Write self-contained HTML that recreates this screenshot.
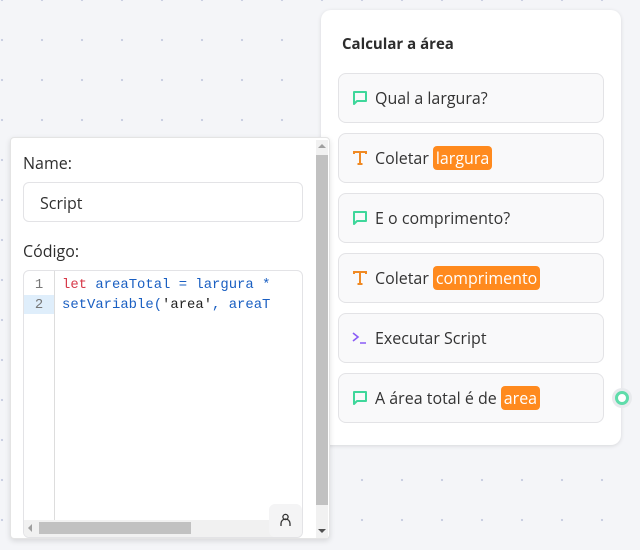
<!DOCTYPE html>
<html><head><meta charset="utf-8"><style>
*{box-sizing:border-box;margin:0;padding:0}
body{width:640px;height:550px;overflow:hidden;position:relative;font-family:"Open Sans","Liberation Sans",sans-serif;color:#303030;
background-color:#f4f5f8;background-image:radial-gradient(circle,#c8cde0 1px,transparent 1.3px);background-size:40px 40px;background-position:-18px -20px}
.group{position:absolute;left:321px;top:10px;width:300px;height:435px;background:#fff;border-radius:10px;box-shadow:0 1px 4px rgba(0,0,0,.12)}
.title{position:absolute;left:21px;top:24px;font-size:15px;font-weight:bold;color:#2d2d2d}
.item{position:absolute;left:17px;width:266px;height:50px;background:#f9f9fa;border:1px solid #e3e3e6;border-radius:8px;font-size:16px;display:flex;align-items:center;padding-left:36px;color:#333}
.item svg{position:absolute;left:13px;top:16px}
.tag{background:#ff8a1e;color:#fff;border-radius:4px;padding:0 3px;margin-left:4px;line-height:24px}
.pop{position:absolute;left:10px;top:137px;width:320px;height:402px;background:#fff;border:1px solid #e4e4e4;border-radius:4px;box-shadow:0 2px 6px rgba(0,0,0,.12)}
.lbl{position:absolute;left:12px;font-size:16px;color:#2d2d2d}
.inp{position:absolute;left:12px;top:44px;width:280px;height:40px;border:1px solid #e3e3e6;border-radius:6px;font-size:16px;padding:9px 16px}
.ed{position:absolute;left:12px;top:132px;width:280px;height:268px;border:1px solid #e3e3e6;border-radius:6px;overflow:hidden;font-family:"Liberation Mono",monospace;font-size:13.9px}
.gut{position:absolute;left:0;top:0;width:31px;height:252px;border-right:1px solid #ddd}
.ln{position:absolute;left:0;width:30px;height:20px;text-align:center;color:#777;line-height:20px}
.code{position:absolute;left:38px;line-height:20px;white-space:pre;color:#1a5fc2}
.sb{position:absolute;left:305px;top:2px;width:12px;height:398px;background:#f1f1f1}
</style></head><body>
<div class="group">
<div class="title">Calcular a área</div>
<div class="item" style="top:63px"><svg width="16" height="16" viewBox="0 0 16 16" fill="none" stroke="#3fd79b" stroke-width="2"><path d="M2 2h12v9H5l-3 3z" stroke-linejoin="round"/></svg>Qual a largura?</div>
<div class="item" style="top:123px"><svg width="16" height="16" viewBox="0 0 16 16" fill="none" stroke="#f08a24" stroke-width="2"><path d="M2 4V2h12v2M8 2v12M5.5 14h5"/></svg>Coletar <span class="tag">largura</span></div>
<div class="item" style="top:183px"><svg width="16" height="16" viewBox="0 0 16 16" fill="none" stroke="#3fd79b" stroke-width="2"><path d="M2 2h12v9H5l-3 3z" stroke-linejoin="round"/></svg>E o comprimento?</div>
<div class="item" style="top:243px"><svg width="16" height="16" viewBox="0 0 16 16" fill="none" stroke="#f08a24" stroke-width="2"><path d="M2 4V2h12v2M8 2v12M5.5 14h5"/></svg>Coletar <span class="tag">comprimento</span></div>
<div class="item" style="top:303px"><svg width="16" height="16" viewBox="0 0 16 16" fill="none" stroke="#8b5cf6" stroke-width="1.6"><path d="M1 3l5 4-5 4M8 13h6"/></svg>Executar Script</div>
<div class="item" style="top:363px"><svg width="16" height="16" viewBox="0 0 16 16" fill="none" stroke="#3fd79b" stroke-width="2"><path d="M2 2h12v9H5l-3 3z" stroke-linejoin="round"/></svg>A área total é de <span class="tag">area</span></div>
</div>
<div style="position:absolute;left:612px;top:388px;width:20px;height:20px;border-radius:50%;background:#e8eaed"></div>
<div style="position:absolute;left:615px;top:391px;width:14px;height:14px;border-radius:50%;border:3px solid #5fdcaa;background:#fff"></div>
<div class="pop">
<div class="lbl" style="top:14px">Name:</div>
<div class="inp">Script</div>
<div class="lbl" style="top:102px">Código:</div>
<div class="ed">
<div class="gut"></div>
<div style="position:absolute;left:0;top:24px;width:30px;height:19px;background:#dfeefb"></div>
<div class="ln" style="top:4px">1</div><div class="ln" style="top:24px">2</div>
<div class="code" style="top:4px"><span style="color:#d73a49">let</span> areaTotal = largura *</div>
<div class="code" style="top:24px">setVariable(<span style="color:#222">'area'</span>, areaT</div>
<div style="position:absolute;left:0;top:249px;width:279px;height:17px;background:#f1f1f1"></div>
<div style="position:absolute;left:15px;top:251px;width:152px;height:12px;background:#c1c1c1"></div>
<div style="position:absolute;left:4px;top:253px;width:0;height:0;border:4px solid transparent;border-right-color:#a0a0a0;border-left:0"></div>
<div style="position:absolute;left:245px;top:233px;width:33px;height:33px;background:#f4f4f5;border-radius:6px"></div>
<svg style="position:absolute;left:255px;top:242px" width="13" height="14" viewBox="0 0 13 14" fill="none" stroke="#333" stroke-width="1.3"><circle cx="6.5" cy="4" r="2.6"/><path d="M2 13v-2.5a4.5 4.5 0 0 1 9 0V13"/></svg>
</div>
<div class="sb"><div style="position:absolute;left:0;top:15px;width:12px;height:350px;background:#c1c1c1"></div>
<div style="position:absolute;left:2px;top:4px;border:4px solid transparent;border-bottom-color:#a0a0a0;border-top:0"></div>
<div style="position:absolute;left:2px;top:389px;border:4px solid transparent;border-top-color:#505050;border-bottom:0"></div></div>
</div>
</body></html>
